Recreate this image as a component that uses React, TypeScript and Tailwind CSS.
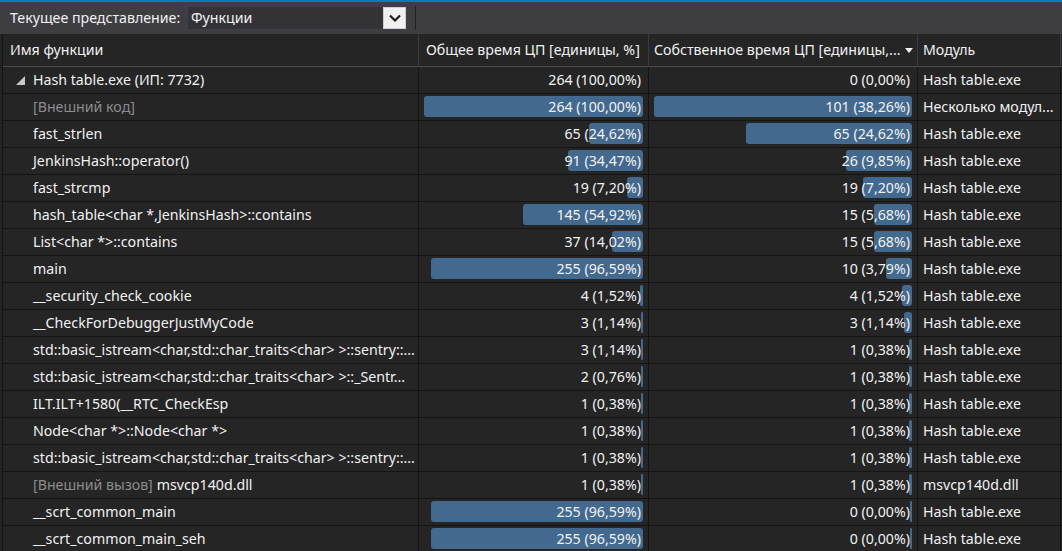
type Row = {
  name: string;
  prefix?: string;
  gray?: boolean;
  root?: boolean;
  total: number;
  totalText: string;
  self: number;
  selfText: string;
  module: string;
};

const rows: Row[] = [
  { name: "Hash table.exe (ИП: 7732)", root: true, total: 264, totalText: "264 (100,00%)", self: 0, selfText: "0 (0,00%)", module: "Hash table.exe" },
  { name: "[Внешний код]", gray: true, total: 264, totalText: "264 (100,00%)", self: 101, selfText: "101 (38,26%)", module: "Несколько модул..." },
  { name: "fast_strlen", total: 65, totalText: "65 (24,62%)", self: 65, selfText: "65 (24,62%)", module: "Hash table.exe" },
  { name: "JenkinsHash::operator()", total: 91, totalText: "91 (34,47%)", self: 26, selfText: "26 (9,85%)", module: "Hash table.exe" },
  { name: "fast_strcmp", total: 19, totalText: "19 (7,20%)", self: 19, selfText: "19 (7,20%)", module: "Hash table.exe" },
  { name: "hash_table<char *,JenkinsHash>::contains", total: 145, totalText: "145 (54,92%)", self: 15, selfText: "15 (5,68%)", module: "Hash table.exe" },
  { name: "List<char *>::contains", total: 37, totalText: "37 (14,02%)", self: 15, selfText: "15 (5,68%)", module: "Hash table.exe" },
  { name: "main", total: 255, totalText: "255 (96,59%)", self: 10, selfText: "10 (3,79%)", module: "Hash table.exe" },
  { name: "__security_check_cookie", total: 4, totalText: "4 (1,52%)", self: 4, selfText: "4 (1,52%)", module: "Hash table.exe" },
  { name: "__CheckForDebuggerJustMyCode", total: 3, totalText: "3 (1,14%)", self: 3, selfText: "3 (1,14%)", module: "Hash table.exe" },
  { name: "std::basic_istream<char,std::char_traits<char> >::sentry::...", total: 3, totalText: "3 (1,14%)", self: 1, selfText: "1 (0,38%)", module: "Hash table.exe" },
  { name: "std::basic_istream<char,std::char_traits<char> >::_Sentr...", total: 2, totalText: "2 (0,76%)", self: 1, selfText: "1 (0,38%)", module: "Hash table.exe" },
  { name: "ILT.ILT+1580(__RTC_CheckEsp", total: 1, totalText: "1 (0,38%)", self: 1, selfText: "1 (0,38%)", module: "Hash table.exe" },
  { name: "Node<char *>::Node<char *>", total: 1, totalText: "1 (0,38%)", self: 1, selfText: "1 (0,38%)", module: "Hash table.exe" },
  { name: "std::basic_istream<char,std::char_traits<char> >::sentry::...", total: 1, totalText: "1 (0,38%)", self: 1, selfText: "1 (0,38%)", module: "Hash table.exe" },
  { name: "msvcp140d.dll", prefix: "[Внешний вызов]", total: 1, totalText: "1 (0,38%)", self: 1, selfText: "1 (0,38%)", module: "msvcp140d.dll" },
  { name: "__scrt_common_main", total: 255, totalText: "255 (96,59%)", self: 0, selfText: "0 (0,00%)", module: "Hash table.exe" },
  { name: "__scrt_common_main_seh", total: 255, totalText: "255 (96,59%)", self: 0, selfText: "0 (0,00%)", module: "Hash table.exe" },
];

const BarCell = ({ value, max, full, text, bar }: { value: number; max: number; full: number; text: string; bar: boolean }) => (
  <div className="relative flex items-center justify-end pr-[7px] border-r border-[#141414] h-full">
    {bar && (
      <div
        className="absolute right-[5px] top-[2px] h-[21px] rounded-[3px] bg-[#44698f]"
        style={{ width: Math.max(2, Math.round((value / max) * full)) }}
      />
    )}
    <span className="relative">{text}</span>
  </div>
);

const App = () => {
  return (
    <div
      className="w-[1062px] h-[551px] overflow-hidden bg-[#252526] text-[#f1f1f1] text-[14.2px]"
      style={{ fontFamily: '"Noto Sans", "Open Sans", sans-serif' }}
    >
      <div className="h-[2px] bg-[#007acc]" />
      {/* toolbar */}
      <div className="h-[32px] bg-[#3e3e42] flex items-center">
        <span className="w-[187px] pl-[10px] shrink-0">Текущее представление:</span>
        <div className="w-[220px] h-[24px] bg-[#333337] border border-[#3f3f46] flex items-center justify-between">
          <span className="pl-[3px]">Функции</span>
          <div className="w-[23px] h-[22px] bg-[#f0f0f0] flex items-center justify-center border border-[#cccccc]">
            <svg width="12" height="8" viewBox="0 0 12 8">
              <path d="M1 1.5 L6 6.5 L11 1.5" fill="none" stroke="#1e1e1e" strokeWidth="2.2" />
            </svg>
          </div>
        </div>
        <div className="ml-[8px] w-px h-[24px] bg-[#222222]" />
      </div>
      {/* table */}
      <div className="ml-[2px] border-l border-[#141414]">
        <div className="grid grid-cols-[416px_230px_269px_143px] h-[33px] border-b border-[#4a4a4f]">
          <div className="flex items-center pl-[7px] border-r border-[#3a3a3e]">Имя функции</div>
          <div className="flex items-center pl-[7px] border-r border-[#3a3a3e] whitespace-nowrap">Общее время ЦП [единицы, %]</div>
          <div className="flex items-center pl-[5px] border-r border-[#3a3a3e] whitespace-nowrap overflow-hidden">
            <span>Собственное время ЦП [единицы,...</span>
            <svg className="ml-[4px] shrink-0" width="8" height="5" viewBox="0 0 8 5">
              <path d="M0 0 H8 L4 5 Z" fill="#f1f1f1" />
            </svg>
          </div>
          <div className="flex items-center pl-[5px] border-r border-[#3a3a3e]">Модуль</div>
        </div>
        {rows.map((r, i) => (
          <div key={i} className="grid grid-cols-[416px_230px_269px_143px] h-[27px] border-b border-[#141414]">
            <div className="flex items-center border-r border-[#141414] whitespace-nowrap overflow-hidden">
              <div className="w-[30px] shrink-0 flex justify-end pr-[8px]">
                {r.root && (
                  <svg width="9" height="9" viewBox="0 0 9 9">
                    <path d="M0 9 L9 0 L9 9 Z" fill="#c8c8c8" />
                  </svg>
                )}
              </div>
              {r.prefix && <span className="text-[#8c8c8c] mr-[4px]">{r.prefix}</span>}
              <span className={r.gray ? "text-[#8c8c8c]" : ""}>{r.name}</span>
            </div>
            <BarCell value={r.total} max={264} full={219} text={r.totalText} bar={!r.root} />
            <BarCell value={r.self} max={101} full={258} text={r.selfText} bar={!r.root} />
            <div className="flex items-center pl-[5px] border-r border-[#141414] whitespace-nowrap overflow-hidden">
              {r.module}
            </div>
          </div>
        ))}
      </div>
    </div>
  );
};

export default App;
